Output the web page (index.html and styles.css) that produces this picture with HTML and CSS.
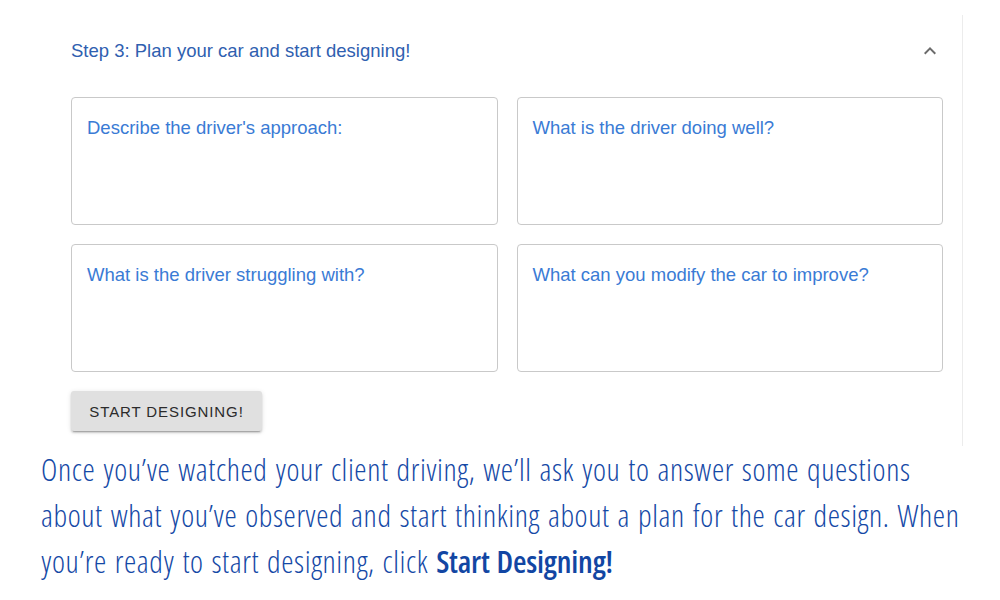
FILE: index.html
```html
<!DOCTYPE html>
<html>
<head>
<meta charset="utf-8">
<link rel="stylesheet" href="styles.css">
</head>
<body>
<div class="page">
  <section class="panel">
    <div class="summary">
      <span class="title">Step 3: Plan your car and start designing!</span>
      <svg class="chev" width="24" height="24" viewBox="0 0 24 24"><path d="M7.41 15.41 12 10.83l4.59 4.58L18 14l-6-6-6 6z" fill="#6b6b6b"/></svg>
    </div>
    <div class="grid">
      <div class="box">Describe the driver's approach:</div>
      <div class="box">What is the driver doing well?</div>
      <div class="box">What is the driver struggling with?</div>
      <div class="box">What can you modify the car to improve?</div>
    </div>
    <button class="btn">START DESIGNING!</button>
  </section>
  <p class="copy">Once you’ve watched your client driving, we’ll ask you to answer some questions about what you’ve observed and start thinking about a plan for the car design. When you’re ready to start designing, click <strong>Start Designing!</strong></p>
</div>
</body>
</html>
```
FILE: styles.css
```css
html, body { margin: 0; background: #fff; }
body { font-family: "Liberation Sans", Arial, sans-serif; }
.page { padding-top: 15px; width: 1000px; }
.panel {
  width: 872px;
  padding: 0 19px 15px 71px;
  border-right: 1px solid #ececec;
}
.summary {
  height: 70px;
  display: flex;
  align-items: center;
  justify-content: space-between;
}
.title { font-size: 18.5px; color: #2f60b0; padding-top: 2px; }
.chev { margin-right: 1px; margin-top: 2px; }
.grid {
  margin-top: 12px;
  display: grid;
  grid-template-columns: 1fr 1fr;
  gap: 19px;
}
.box {
  height: 128px;
  box-sizing: border-box;
  border: 1px solid #c9c9c9;
  border-radius: 4px;
  padding: 19px 15px;
  font-size: 18.5px;
  color: #3a7bd5;
}
.btn {
  margin-top: 19px;
  height: 40px;
  width: 191px;
  border: none;
  border-radius: 3px;
  background: #e0e0e0;
  color: #2b2b2b;
  font-family: "Liberation Sans", Arial, sans-serif;
  font-size: 15px;
  letter-spacing: 0.9px;
  box-shadow: 0 3px 1px -2px rgba(0,0,0,.2), 0 2px 2px 0 rgba(0,0,0,.14), 0 1px 5px 0 rgba(0,0,0,.12);
  padding: 0;
}
.copy {
  margin: 0;
  padding: 0 28px 0 41px;
  font-family: "Open Sans", sans-serif;
  font-stretch: 75%;
  font-weight: 300;
  font-size: 31px;
  letter-spacing: 0.6px;
  word-spacing: 1.5px;
  line-height: 46px;
  color: #1549a6;
}
.copy strong { font-weight: 600; color: #1246a3; letter-spacing: -0.2px; }
```
